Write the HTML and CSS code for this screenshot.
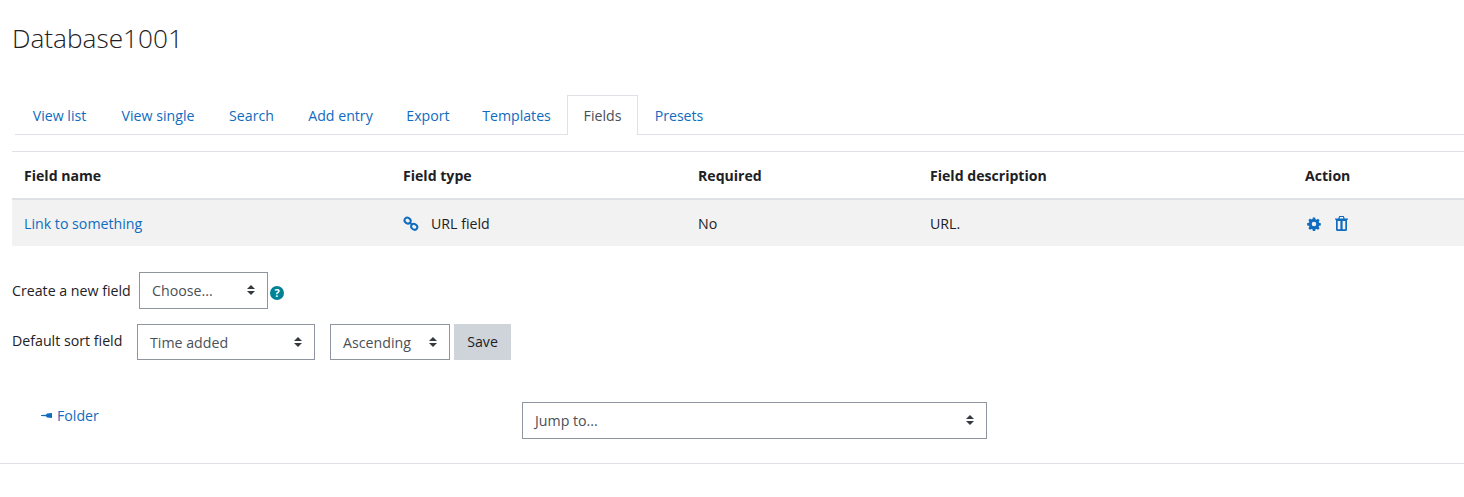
FILE: index.html
```html
<!DOCTYPE html>
<html lang="en">
<head>
<meta charset="utf-8">
<title>Database1001</title>
<link rel="stylesheet" href="styles.css">
</head>
<body>
<main class="page">
  <h1 class="title">Database1001</h1>
  <nav class="tabs">
    <a class="tab" href="#">View list</a>
    <a class="tab" href="#">View single</a>
    <a class="tab" href="#">Search</a>
    <a class="tab" href="#">Add entry</a>
    <a class="tab" href="#">Export</a>
    <a class="tab" href="#">Templates</a>
    <a class="tab active" href="#">Fields</a>
    <a class="tab" href="#">Presets</a>
  </nav>
  <table class="fields">
    <colgroup>
      <col class="c1"><col class="c2"><col class="c3"><col class="c4"><col class="c5">
    </colgroup>
    <thead>
      <tr><th>Field name</th><th>Field type</th><th>Required</th><th>Field description</th><th>Action</th></tr>
    </thead>
    <tbody>
      <tr>
        <td><a href="#">Link to something</a></td>
        <td>
          <span class="type">
            <svg class="icon-link" viewBox="0 0 16 16" width="16" height="16" aria-hidden="true">
              <g fill="none" stroke="#0f6cbf" stroke-width="2">
                <ellipse cx="4.600" cy="4.600" rx="3.200" ry="2.700" transform="rotate(35 4.600 4.600)"/>
                <ellipse cx="11.200" cy="10.800" rx="3.200" ry="2.700" transform="rotate(35 11.200 10.800)"/>
                <path d="M6.500 6.500l3 2.600"/>
              </g>
            </svg>
            URL field
          </span>
        </td>
        <td>No</td>
        <td>URL.</td>
        <td>
          <span class="actions">
            <svg viewBox="0 0 16 16" width="14" height="14" aria-hidden="true">
              <path fill="#0f6cbf" fill-rule="evenodd" d="M6.700.5h2.600l.4 2 1.200.5 1.700-1.100 1.800 1.800-1.100 1.700.5 1.200 2 .4v2.600l-2 .4-.5 1.200 1.100 1.700-1.800 1.800-1.700-1.100-1.200.5-.4 2H6.700l-.4-2-1.200-.5-1.700 1.100-1.800-1.800 1.100-1.700-.5-1.200-2-.4V6.900l2-.4.5-1.200-1.100-1.700 1.800-1.800 1.700 1.100 1.200-.5zM8 5.500a2.600 2.600 0 1 0 0 5.200a2.600 2.600 0 0 0 0-5.200z"/>
            </svg>
            <svg viewBox="0 0 13 15" width="13" height="15" aria-hidden="true">
              <path fill="#0f6cbf" fill-rule="evenodd" d="M4.200 0h4.600l.9 2.500H13V3.700h-1v9.800A1.500 1.500 0 0 1 10.500 15h-8A1.500 1.500 0 0 1 1 13.500V3.700H0V2.500h3.300zM5 1l-.4 1.500h3.800L8 1zM2.700 5v8.200h2.700V5zm4.900 0v8.200h2.700V5z"/>
            </svg>
          </span>
        </td>
      </tr>
    </tbody>
  </table>

  <div class="form-row new-field">
    <label class="lbl">Create a new field</label>
    <span class="select s-choose">Choose...<i class="arrows"></i></span>
    <span class="help" aria-hidden="true">?</span>
  </div>
  <div class="form-row sort-field">
    <label class="lbl">Default sort field</label>
    <span class="select s-time">Time added<i class="arrows"></i></span>
    <span class="select s-asc">Ascending<i class="arrows"></i></span>
    <button class="btn" type="button">Save</button>
  </div>

  <div class="activity-nav">
    <a class="back" href="#">
      <svg class="back-arrow" viewBox="0 0 11 5" width="11" height="5" aria-hidden="true">
        <path fill="#0f6cbf" d="M0 2L5 1.800 6 .5 11 0v5L6 4.500 5 3.200 0 3z"/>
      </svg>
      Folder
    </a>
    <span class="select s-jump">Jump to...<i class="arrows"></i></span>
  </div>
  <hr class="rule">
</main>
</body>
</html>
```
FILE: styles.css
```css
* { box-sizing: border-box; }
html, body { margin: 0; padding: 0; }
body {
  background: #fff;
  color: #1d2125;
  font-family: "Open Sans", "Noto Sans", "Liberation Sans", sans-serif;
  font-size: 14.2px;
  overflow: hidden;
  height: 497px;
}
a { color: #0f6cbf; text-decoration: none; }
.page { padding: 0 0 0 12px; }
.title {
  margin: 0;
  padding-top: 19px;
  height: 95px;
  font-size: 26.2px;
  line-height: 38px;
  font-weight: 300;
  color: #1d2125;
}
.tabs {
  display: grid;
  grid-template-columns: 89px 108px 79px 99px 76px 101px 71px 82px 1fr;
  height: 40px;
  margin-left: 3px;
  border-bottom: 1px solid #dee2e6;
}
.tab {
  height: 40px;
  font-size: 14.16px;
  line-height: 39px;
  text-align: center;
  border: 1px solid transparent;
  border-bottom: 0;
}
.tab.active {
  background: #fff;
  color: #495057;
  border-color: #dee2e6;
}
.fields {
  margin-top: 16px;
  width: 1452px;
  table-layout: fixed;
  border-collapse: collapse;
}
.c1 { width: 379px; }
.c2 { width: 295px; }
.c3 { width: 232px; }
.c4 { width: 375px; }
.c5 { width: 171px; }
.fields th {
  height: 47px;
  padding: 2px 12px 0;
  text-align: left;
  font-size: 14.1px;
  font-weight: 700;
  border-top: 1px solid #dee2e6;
  border-bottom: 2px solid #dee2e6;
}
.fields td {
  height: 47px;
  padding: 2px 12px 0;
  background: #f2f2f2;
}
.type { display: flex; align-items: center; gap: 12px; }
.actions { display: flex; align-items: center; gap: 14px; padding-left: 2px; }
.form-row { display: flex; align-items: flex-start; }
.new-field { margin-top: 26px; height: 37px; }
.sort-field { margin-top: 15px; height: 36px; }
.lbl { line-height: 37px; }
.new-field .lbl { width: 127px; }
.sort-field .lbl { width: 125px; line-height: 34px; }
.select {
  position: relative;
  display: block;
  border: 1px solid #8f959e;
  background: #fff;
  color: #495057;
  padding-left: 12px;
}
.arrows {
  position: absolute;
  top: 50%;
  right: 12px;
  width: 8px;
  height: 10px;
  margin-top: -5px;
}
.arrows::before, .arrows::after {
  content: "";
  position: absolute;
  left: 0;
  border-left: 4px solid transparent;
  border-right: 4px solid transparent;
}
.arrows::before { top: 0; border-bottom: 4px solid #343a40; }
.arrows::after { bottom: 0; border-top: 4px solid #343a40; }
.s-choose { width: 129px; height: 37px; line-height: 35px; }
.help {
  width: 14px;
  height: 14px;
  margin: 14px 0 0 2px;
  border-radius: 50%;
  background: #008196;
  color: #fff;
  font-size: 11px;
  font-weight: 700;
  line-height: 14px;
  text-align: center;
}
.s-time { width: 178px; height: 36px; line-height: 36px; }
.s-asc { width: 120px; height: 36px; line-height: 36px; margin-left: 15px; }
.btn {
  width: 57px;
  height: 36px;
  margin-left: 4px;
  padding: 0;
  border: 0;
  background: #ced4da;
  color: #1d2125;
  font: inherit;
}
.activity-nav {
  display: flex;
  align-items: flex-start;
  margin-top: 42px;
  height: 61px;
}
.back {
  display: flex;
  align-items: center;
  gap: 5px;
  width: 510px;
  height: 28px;
  padding-left: 29px;
}
.back-arrow { flex: none; }
.s-jump { width: 465px; height: 37px; line-height: 35px; }
.rule {
  margin: 0 0 0 -12px;
  border: 0;
  border-top: 1px solid #dee2e6;
}
```
